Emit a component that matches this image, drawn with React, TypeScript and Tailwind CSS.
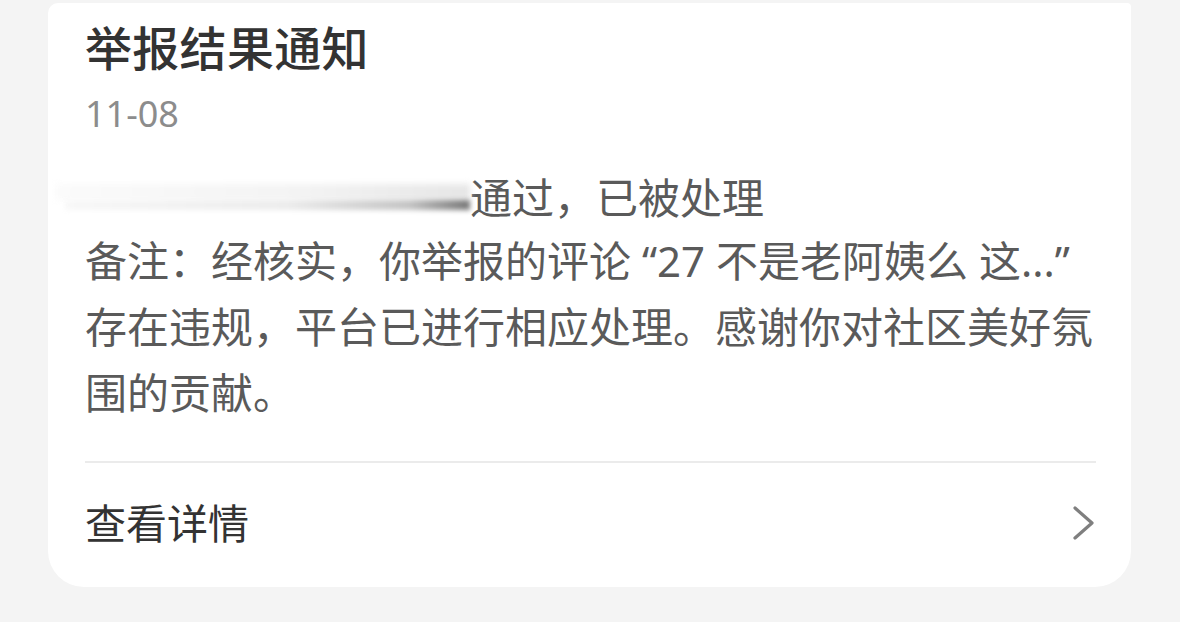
export default function App() {
    const font = { fontFamily: '"Noto Sans", "Noto Sans CJK SC", sans-serif' };

    return (
        <div className="w-[1180px] h-[622px] overflow-hidden bg-[#f4f4f4] pt-[3px] pl-[48px]" style={font}>
            <div className="w-[1083px] h-[584px] bg-white rounded-tl-[10px] rounded-tr-[4px] rounded-b-[36px] pt-[15px] px-[37px] pr-[35px]">
                {/* Title */}
                <h1 className="text-[47px] leading-[60px] font-medium text-[#333333] tracking-[0.3px]">
                    举报结果通知
                </h1>
                <p className="mt-[11px] text-[36px] leading-[50px] text-[#8c8c8c]">11-08</p>

                {/* Blurred first line */}
                <div className="mt-[26px] flex items-center h-[66px] -ml-[30px]">
                    <div className="relative w-[415px] h-[40px]">
                        <div className="absolute left-0 right-0 top-[6px] h-[16px] bg-[linear-gradient(to_right,#fbfbfb_0%,#f3f3f3_60%,#e6e6e6_100%)] blur-[3px]" />
                        <div className="absolute left-[10px] right-0 top-[22px] h-[10px] bg-[linear-gradient(to_right,#f8f8f8_0%,#ececec_55%,#c4c4c4_85%,#777777_100%)] blur-[2.5px]" />
                    </div>
                    <span className="text-[42px] leading-[66px] text-[#5a5a5a] whitespace-nowrap">
                        通过，已被处理
                    </span>
                </div>

                {/* Body */}
                <div className="-mt-[3px] text-[42px] leading-[66px] text-[#5a5a5a]">
                    <p className="whitespace-nowrap">备注：经核实，你举报的评论 “27 不是老阿姨么 这...”</p>
                    <p className="whitespace-nowrap">存在违规，平台已进行相应处理。感谢你对社区美好氛</p>
                    <p className="whitespace-nowrap">围的贡献。</p>
                </div>

                <div className="mt-[35px] h-[2px] bg-[#ebebeb]" />

                {/* Footer link */}
                <div className="mt-[27px] flex items-center justify-between h-[66px]">
                    <span className="text-[41px] leading-[66px] text-[#333333]">查看详情</span>
                    <svg width="26" height="36" viewBox="0 0 26 36" className="mr-[-1px]">
                        <polyline
                            points="4,3 21,18 4,33"
                            fill="none"
                            stroke="#7f7f7f"
                            strokeWidth="3.2"
                            strokeLinecap="round"
                            strokeLinejoin="round"
                        />
                    </svg>
                </div>
            </div>
        </div>
    );
}
